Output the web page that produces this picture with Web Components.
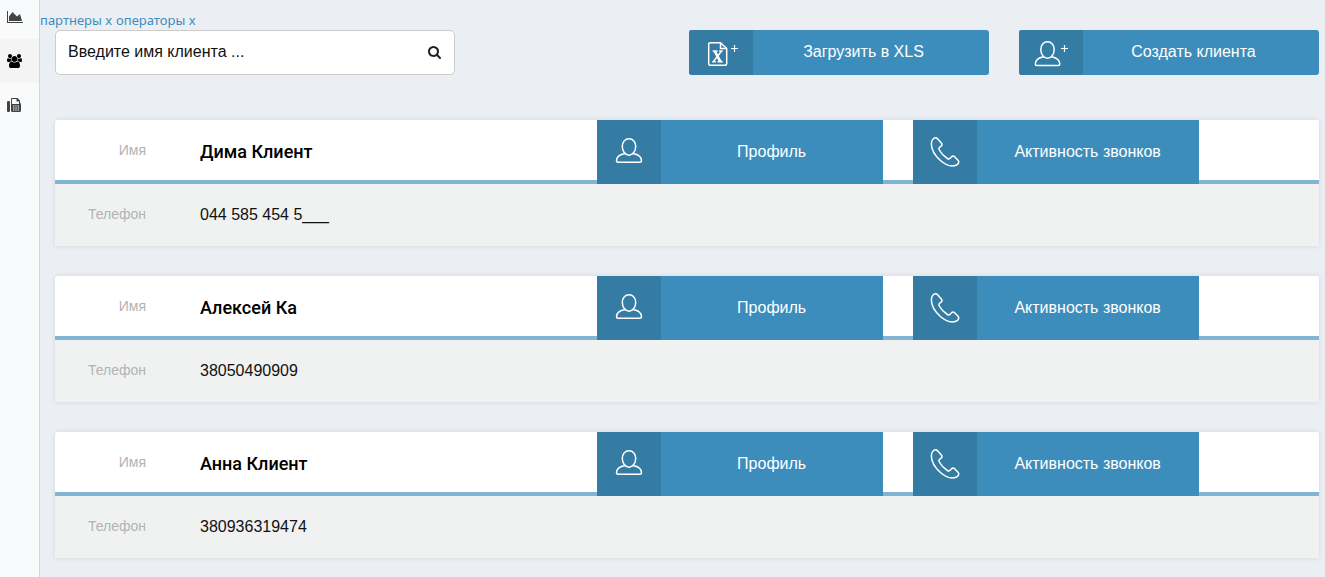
<!DOCTYPE html>
<html lang="ru">
<head>
<meta charset="utf-8">
<title>Клиенты</title>
<style>
html, body { margin: 0; height: 100%; }
body { background: #ebeef3; font-family: "Liberation Sans", Arial, sans-serif; font-size: 16px; color: #000; overflow: hidden; }
</style>
</head>
<body>
<client-app></client-app>
<script>
const ICONS = {
  chart: ['0 0 2048 1792', '<path fill="currentColor" d="M2048 1536v128h-2048v-1536h128v1408h1920zm-384-1024l256 896h-1664v-576l448-576 576 576z"/>'],
  users: ['0 0 1920 1792', '<path fill="currentColor" d="M593 896q-162 5-265 128h-134q-82 0-138-40.5t-56-118.5q0-353 124-353 6 0 43.5 21t97.5 42.5 119 21.5q67 0 133-23-5 37-5 66 0 139 81 256zm1071 637q0 120-73 189.5t-194 69.5h-874q-121 0-194-69.5t-73-189.5q0-53 3.5-103.5t14-109 26.5-108.5 43-97.5 62-81 85.5-53.5 111.5-20q10 0 43 21.5t73 48 107 48 135 21.5 135-21.5 107-48 73-48 43-21.5q61 0 111.500 20t85.500 53.500 62 81 43 97.500 26.500 108.500 14 109 3.500 103.500zm-1024-1277q0 106-75 181t-181 75-181-75-75-181 75-181 181-75 181 75 75 181zm704 384q0 159-112.500 271.500t-271.500 112.500-271.500-112.500-112.500-271.500 112.500-271.500 271.500-112.500 271.500 112.500 112.500 271.500zm576 225q0 78-56 118.500t-138 40.500h-134q-103-123-265-128 81-117 81-256 0-29-5-66 66 23 133 23 59 0 119-21.500t97.500-42.500 43.500-21q124 0 124 353zm-128-609q0 106-75 181t-181 75-181-75-75-181 75-181 181-75 181 75 75 181z"/>'],
  fax: ['0 0 14 14', '<path fill="currentColor" fill-rule="evenodd" d="M1 3h1a1 1 0 0 1 1 1v9a1 1 0 0 1-1 1H1a1 1 0 0 1-1-1V4a1 1 0 0 1 1-1zM4 1a1 1 0 0 1 1-1h5.500L13 2.500V5a1.200 1.200 0 0 1 1 1.200V12.500a1.500 1.500 0 0 1-1.500 1.500H5.500A1.500 1.500 0 0 1 4 12.500zM5 1v5h7V3.500H9.500V1zM6 7.500v1h1.400v-1zM8.300 7.500v1h1.400v-1zM10.600 7.500v1H12v-1zM6 9.500v1h1.400v-1zM8.300 9.500v1h1.400v-1zM10.600 9.500v1H12v-1zM6 11.500v1h1.400v-1zM8.300 11.500v1h1.400v-1zM10.600 11.500v1H12v-1z"/>'],
  search: ['0 0 1792 1792', '<path fill="currentColor" d="M1216 832q0-185-131.500-316.500t-316.500-131.500-316.500 131.500-131.500 316.500 131.500 316.500 316.500 131.500 316.500-131.500 131.500-316.500zm512 832q0 52-38 90t-90 38q-54 0-90-38l-343-342q-179 124-399 124-143 0-273.500-55.500t-225-150-150-225-55.500-273.500 55.500-273.500 150-225 225-150 273.500-55.500 273.500 55.500 225 150 150 225 55.500 273.500q0 220-124 399l343 343q37 37 37 90z"/>'],
  xls: ['0 -1 34 28', '<g fill="none" stroke="currentColor" stroke-width="1.500" stroke-linejoin="round"><path d="M16.500 2.700H6.200a1.500 1.500 0 0 0-1.500 1.500v19.600a1.500 1.500 0 0 0 1.500 1.500h15a1.500 1.500 0 0 0 1.500-1.500V8.500z"/><path d="M16.500 2.700v5.800h6.200"/><path stroke-width="1.200" d="M30.500 5v7M27 8.500h7"/></g><path fill="currentColor" d="M8.700 10.200h4.700v1.500h-.8l1.400 2.900 2-2.900h-.9v-1.500h3.600v1.500h-.8l-3.100 4.200 2.900 5h1v1.700h-5.200v-1.700h.8l-1.300-2.800-2.200 2.800h1v1.700H8.200v-1.700h.8l3.200-4.300-2.700-4.900h-.8z"/>'],
  userplus: ['0 -1 34 28', '<g fill="none" stroke="currentColor" stroke-width="1.500" stroke-linejoin="round"><path d="M13.500 1.700c-4 0-6.700 3.300-6.700 7.700 0 4.600 3 8.900 6.700 8.900s6.700-4.300 6.700-8.900c0-4.400-2.700-7.700-6.700-7.700zM9.600 16.700C5 17.500 1.500 19 1.300 24c0 1 .4 1.500 1.500 1.500h21.500c1.100 0 1.500-.5 1.500-1.500-.2-5-3.700-6.500-8.400-7.300"/><path stroke-width="1.200" d="M30.500 5v7M27 8.500h7"/></g>'],
  user: ['0 1 28 28', '<path fill="none" stroke="currentColor" stroke-width="1.500" stroke-linejoin="round" d="M14 1.800c-4 0-6.700 3.300-6.700 7.600 0 4.600 3 8.800 6.700 8.800s6.700-4.200 6.700-8.800c0-4.300-2.700-7.600-6.700-7.600zM10 16.600C5.500 17.400 1.700 19 1.500 23.700c0 1 .5 1.500 1.500 1.500h22c1 0 1.500-.5 1.500-1.500-.2-4.700-4-6.300-8.500-7.100"/>'],
  phone: ['0 0 30 30', '<path fill="none" stroke="currentColor" stroke-width="1.500" stroke-linejoin="round" d="M5.500.8C3.600 1 1.500 3.200 1.400 6.500c-.2 6 4 12.500 9 17 4.400 3.800 9.400 6 13.600 5.300 2.700-.5 4.800-2.300 4.700-4.300 0-.7-.4-1-.9-1.500l-3.200-3.300c-.9-.9-2-1-2.900-.1l-1.800 1.900c-.7.700-1.500.6-2.500 0-3.300-2-6.300-5.200-8.100-8.500-.5-1-.5-1.800.2-2.500l1.800-1.600c.9-.8.8-1.900 0-2.900L7.400 1.600C6.800 1 6.300.7 5.500.8z"/>']
};

class UiIcon extends HTMLElement {
  connectedCallback() {
    const [box, shape] = ICONS[this.getAttribute('name')];
    this.attachShadow({ mode: 'open' }).innerHTML = `
      <style>
        :host { display: block; flex: none; }
        svg { display: block; width: 100%; height: 100%; }
      </style>
      <svg viewBox="${box}" aria-hidden="true">${shape}</svg>`;
  }
}
customElements.define('ui-icon', UiIcon);

class SideNav extends HTMLElement {
  connectedCallback() {
    this.attachShadow({ mode: 'open' }).innerHTML = `
      <style>
        :host { display: block; box-sizing: border-box; width: 40px; background: #f9fafc; border-right: 1px solid #d2d6de; }
        nav { margin-top: -5px; }
        a { display: flex; align-items: center; height: 44px; padding-left: 7px; color: #444; }
        a.active { background: #f4f4f5; color: #000; }
        ui-icon { height: 14px; width: 16px; }
        ui-icon[name=users] { width: 15px; }
        ui-icon[name=fax] { width: 14px; }
      </style>
      <nav>
        <a href="#stats" aria-label="Статистика"><ui-icon name="chart"></ui-icon></a>
        <a href="#clients" class="active" aria-label="Клиенты"><ui-icon name="users"></ui-icon></a>
        <a href="#calls" aria-label="Звонки"><ui-icon name="fax"></ui-icon></a>
      </nav>`;
  }
}
customElements.define('side-nav', SideNav);

class SearchBox extends HTMLElement {
  connectedCallback() {
    this.attachShadow({ mode: 'open' }).innerHTML = `
      <style>
        :host { display: block; width: 400px; }
        form { display: flex; align-items: center; box-sizing: border-box; height: 45px; padding: 0 12px 2px; background: #fff; border: 1px solid #ccc; border-radius: 5px; }
        input { flex: 1; min-width: 0; height: 40px; padding: 0; border: 0; outline: 0; background: none; font: inherit; color: #000; }
        input::placeholder { color: #111; opacity: 1; }
        button { display: flex; padding: 0; border: 0; background: none; color: #222; }
        ui-icon { width: 15px; height: 14px; }
      </style>
      <form role="search">
        <input type="text" aria-label="Имя клиента" placeholder="Введите имя клиента ...">
        <button type="button" aria-label="Найти"><ui-icon name="search"></ui-icon></button>
      </form>`;
  }
}
customElements.define('search-box', SearchBox);

class ActionButton extends HTMLElement {
  connectedCallback() {
    const href = this.getAttribute('href');
    const tag = href ? 'a' : 'button';
    this.attachShadow({ mode: 'open' }).innerHTML = `
      <style>
        :host { display: block; height: 45px; }
        .action { display: flex; width: 100%; height: 100%; padding: 0; border: 0; border-radius: inherit; overflow: hidden; background: #3c8dbc; color: #fff; font: inherit; line-height: 20px; text-decoration: none; cursor: pointer; }
        .pic { display: flex; align-items: center; justify-content: center; flex: none; width: 64px; height: 100%; background: #357ca5; }
        .text { flex: 1; align-self: center; text-align: center; }
        button .text { padding: 0 15px 2px 0; }
        ui-icon { width: 28px; height: 28px; }
        ui-icon[name=xls], ui-icon[name=userplus] { width: 34px; height: 28px; }
        ui-icon[name=phone] { width: 30px; height: 30px; }
      </style>
      <${tag} class="action" ${href ? `href="${href}"` : 'type="button"'}>
        <span class="pic"><ui-icon name="${this.getAttribute('icon')}"></ui-icon></span>
        <span class="text"><slot></slot></span>
      </${tag}>`;
  }
}
customElements.define('action-button', ActionButton);

class ClientCard extends HTMLElement {
  connectedCallback() {
    this.attachShadow({ mode: 'open' }).innerHTML = `
      <style>
        :host { display: block; border-radius: 3px 3px 0 0; background: #f0f2f1; box-shadow: 0 0 5px rgba(0, 0, 0, .1); }
        .head { display: grid; grid-template-columns: 5fr 3fr 3fr 1fr; height: 64px; background: linear-gradient(#fff 60px, #82b4d4 60px); border-radius: inherit; }
        .row { display: grid; grid-template-columns: 91px 1fr; column-gap: 54px; align-items: center; line-height: 20px; }
        .head .row { height: 64px; }
        .foot { height: 62px; }
        .label { padding-bottom: 2px; color: #b3b3b3; font-size: 14px; text-align: right; }
        .head .label { padding-bottom: 4px; }
        .head .value { font-family: Roboto, sans-serif; font-size: 18px; font-weight: 500; }
        .foot .value { color: #111; }
        action-button { height: 64px; margin: 0 15px; }
      </style>
      <div class="head">
        <div class="row"><span class="label">Имя</span><span class="value"><slot name="name"></slot></span></div>
        <action-button icon="user" href="#profile">Профиль</action-button>
        <action-button icon="phone" href="#activity">Активность звонков</action-button>
      </div>
      <div class="row foot"><span class="label">Телефон</span><span class="value"><slot name="phone"></slot></span></div>`;
  }
}
customElements.define('client-card', ClientCard);

class ClientApp extends HTMLElement {
  connectedCallback() {
    this.attachShadow({ mode: 'open' }).innerHTML = `
      <style>
        :host { display: flex; min-height: 100%; }
        main { flex: 1; min-width: 0; padding: 10px 6px 19px 15px; }
        .crumbs { display: flex; gap: 4px; margin-left: -15px; height: 20px; font: 13px/20px "Noto Sans", sans-serif; }
        .crumbs a { color: #3c8dbc; text-decoration: none; }
        .tools { display: flex; gap: 30px; margin-bottom: 45px; }
        .tools search-box { margin-right: auto; }
        .tools action-button { width: 300px; border-radius: 3px; }
        .list { display: grid; gap: 30px; }
      </style>
      <side-nav></side-nav>
      <main>
        <div class="crumbs"><a href="#partners">партнеры x</a><a href="#operators">операторы x</a></div>
        <div class="tools">
          <search-box></search-box>
          <action-button icon="xls">Загрузить в XLS</action-button>
          <action-button icon="userplus">Создать клиента</action-button>
        </div>
        <div class="list">
          <client-card><span slot="name">Дима Клиент</span><span slot="phone">044 585 454 5___</span></client-card>
          <client-card><span slot="name">Алексей Ка</span><span slot="phone">38050490909</span></client-card>
          <client-card><span slot="name">Анна Клиент</span><span slot="phone">380936319474</span></client-card>
        </div>
      </main>`;
  }
}
customElements.define('client-app', ClientApp);
</script>
</body>
</html>
